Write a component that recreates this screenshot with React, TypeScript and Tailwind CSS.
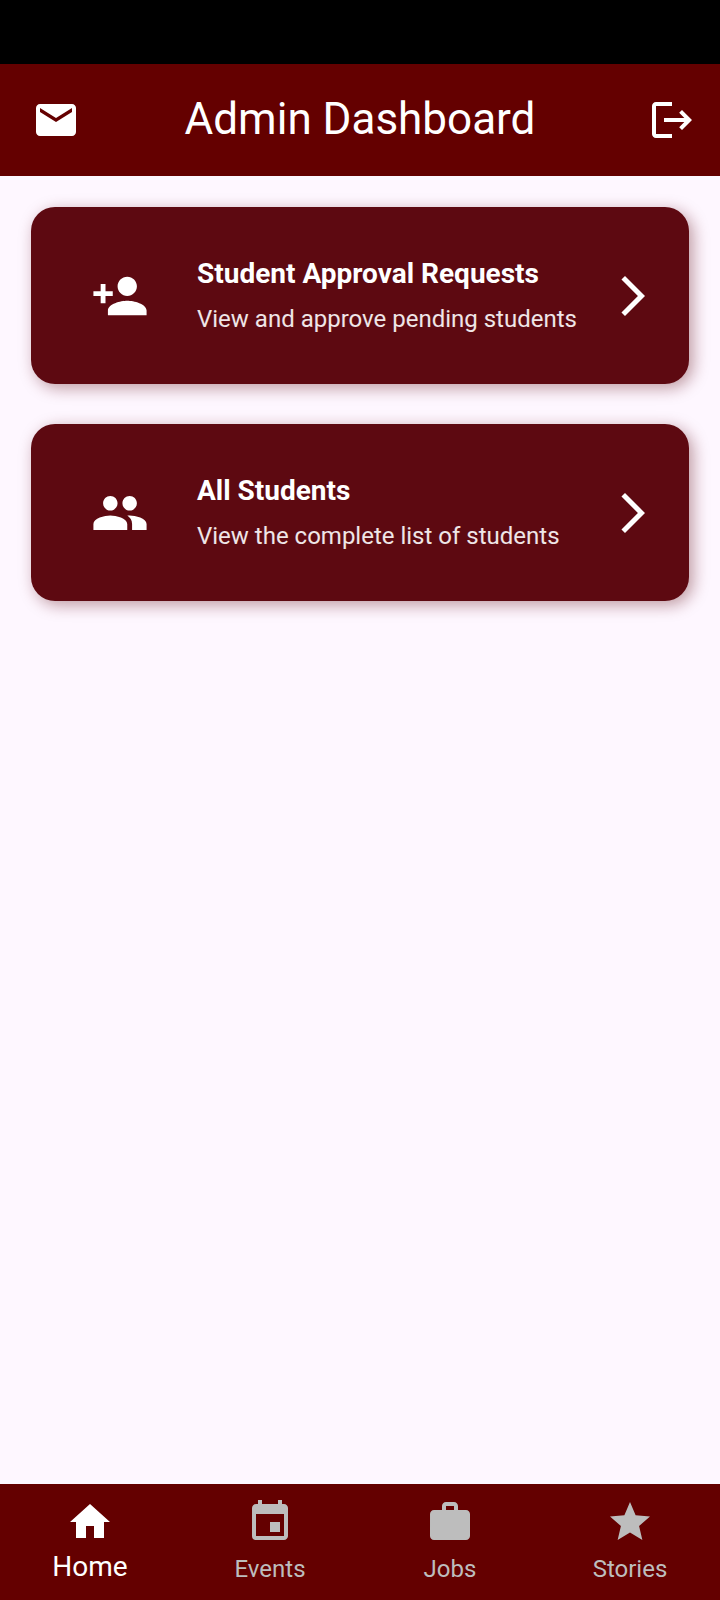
import type { IconType } from "react-icons";
import {
  MdArrowForwardIos,
  MdEmail,
  MdEvent,
  MdGroup,
  MdLogout,
  MdPersonAdd,
  MdStar,
  MdWork,
} from "react-icons/md";

const HomeIcon = ({ className }: { className?: string }) => (
  <svg viewBox="0 0 24 24" fill="currentColor" className={className} aria-hidden="true">
    <path d="M10 20v-6h4v6h5v-8h3L12 3 2 12h3v8z" />
  </svg>
);

const cards: { title: string; text: string; Icon: IconType }[] = [
  {
    title: "Student Approval Requests",
    text: "View and approve pending students",
    Icon: MdPersonAdd,
  },
  {
    title: "All Students",
    text: "View the complete list of students",
    Icon: MdGroup,
  },
];

const tabs = [
  { label: "Home", Icon: HomeIcon, active: true },
  { label: "Events", Icon: MdEvent, active: false },
  { label: "Jobs", Icon: MdWork, active: false },
  { label: "Stories", Icon: MdStar, active: false },
];

const App = () => {
  return (
    <div className="flex min-h-screen flex-col bg-[#fef7ff] font-[Roboto,sans-serif] text-white">
      {/* Status bar */}
      <div className="h-16 bg-black" />

      {/* App bar */}
      <header className="flex h-28 items-center justify-between bg-[#640000] px-6">
        <button aria-label="Messages" className="pl-2">
          <MdEmail className="size-12" />
        </button>
        <h1 className="pb-0.5 text-[44px] leading-[52px]">Admin Dashboard</h1>
        <button aria-label="Log out" className="pl-2">
          <MdLogout className="size-12" />
        </button>
      </header>

      {/* Cards */}
      <main className="flex flex-1 flex-col gap-10 p-[31px]">
        {cards.map(({ title, text, Icon }) => (
          <button
            key={title}
            className="flex items-center gap-12 rounded-3xl bg-[#5d0911] py-[49px] pl-[60px] pr-8 text-left shadow-[4px_4px_16px_rgba(93,9,17,0.4)]"
          >
            <Icon className="size-[58px] shrink-0" />
            <div className="flex flex-1 flex-col gap-[11px] whitespace-nowrap">
              <h2 className="text-[28px] font-bold leading-9">{title}</h2>
              <p className="text-[24px] leading-8 text-white/90">{text}</p>
            </div>
            <MdArrowForwardIos className="-ml-12 size-12 shrink-0" />
          </button>
        ))}
      </main>

      {/* Bottom navigation */}
      <nav className="grid h-[116px] grid-cols-4 bg-[#640000] pt-[14px]">
        {tabs.map(({ label, Icon, active }) => (
          <a
            key={label}
            href="#"
            className={
              active
                ? "flex flex-col items-center text-[28px] leading-[42px]"
                : "flex flex-col items-center text-[24px] leading-[46px] text-[#bdbdbd]"
            }
          >
            <Icon className="size-12" />
            {label}
          </a>
        ))}
      </nav>
    </div>
  );
};

export default App;
